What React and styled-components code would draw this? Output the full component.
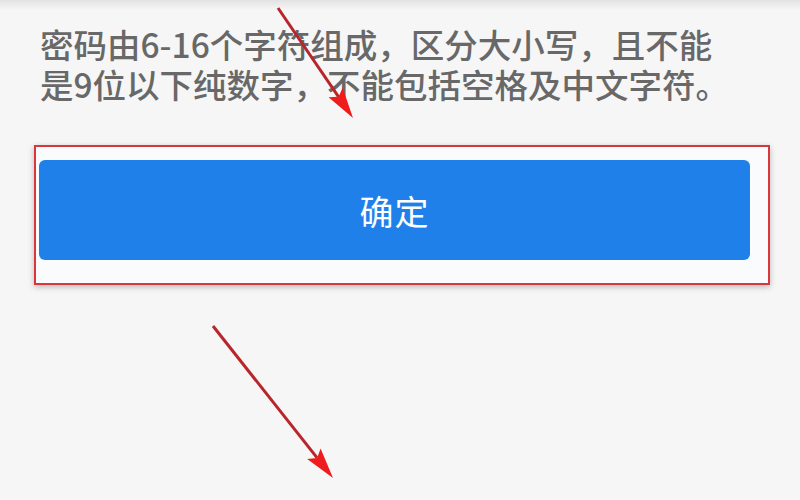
import React from "react";
import styled, { createGlobalStyle } from "styled-components";

const GlobalStyle = createGlobalStyle`
  html, body {
    margin: 0;
    padding: 0;
    background: #f6f6f6;
  }
  body {
    font-family: "Noto Sans CJK SC", "Noto Sans", sans-serif;
  }
`;

const Page = styled.div`
  position: relative;
  width: 800px;
  height: 500px;
  overflow: hidden;
  background: #f6f6f6;
`;

const TopShade = styled.div`
  height: 10px;
  background: linear-gradient(#e2e2e2, #f6f6f6);
`;

const Hint = styled.p`
  margin: 0;
  padding: 14px 0 0 40px;
  font-size: 33.5px;
  font-weight: 500;
  line-height: 40px;
  color: #686868;
`;

const Highlight = styled.div`
  margin: 41px 0 0 34px;
  width: 736px;
  height: 140px;
  border: 2px solid #d9363e;
  box-shadow: 0 2px 6px rgba(0, 0, 0, 0.25);
  background: #fafbfc;
  padding: 13px 18px 23px 3px;
  box-sizing: border-box;
`;

const ConfirmButton = styled.button`
  display: flex;
  align-items: center;
  justify-content: center;
  width: 100%;
  height: 100%;
  border: none;
  border-radius: 6px;
  background: #1f80ea;
  color: #ffffff;
  font-family: "Noto Sans CJK SC", sans-serif;
  font-size: 34px;
  letter-spacing: 1px;
  cursor: pointer;
`;

const Annotations = styled.svg`
  position: absolute;
  left: 0;
  top: 0;
  pointer-events: none;
`;

function Arrow({ x1, y1, x2, y2 }) {
  const angle = Math.atan2(y2 - y1, x2 - x1);
  const len = 32;
  const spread = 0.27;
  const ax = x2 - len * Math.cos(angle - spread);
  const ay = y2 - len * Math.sin(angle - spread);
  const bx = x2 - len * Math.cos(angle + spread);
  const by = y2 - len * Math.sin(angle + spread);
  const mx = x2 - len * 0.8 * Math.cos(angle);
  const my = y2 - len * 0.8 * Math.sin(angle);
  return (
    <g>
      <line x1={x1} y1={y1} x2={mx} y2={my} stroke="#b8262c" strokeWidth="3" />
      <polygon points={`${x2},${y2} ${ax},${ay} ${mx},${my} ${bx},${by}`} fill="#ee1c1c" />
    </g>
  );
}

export default function App() {
  return (
    <>
      <GlobalStyle />
      <Page>
        <TopShade />
        <Hint>
          密码由6-16个字符组成，区分大小写，且不能
          <br />
          是9位以下纯数字，不能包括空格及中文字符。
        </Hint>
        <Highlight>
          <ConfirmButton>确定</ConfirmButton>
        </Highlight>
        <Annotations width="800" height="500">
          <Arrow x1={278} y1={8} x2={353} y2={118} />
          <Arrow x1={213} y1={326} x2={333} y2={478} />
        </Annotations>
      </Page>
    </>
  );
}
